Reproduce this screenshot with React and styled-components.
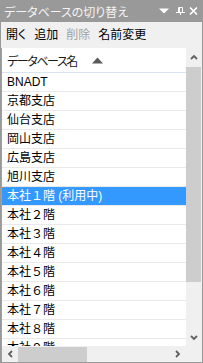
import React from 'react';
import styled, { createGlobalStyle } from 'styled-components';

const Global = createGlobalStyle`
  html, body {
    margin: 0;
    padding: 0;
    background: #ffffff;
  }
`;

const Panel = styled.div`
  width: 203px;
  height: 363px;
  box-sizing: border-box;
  display: flex;
  flex-direction: column;
  background: #f0f0f0;
  border: 1px solid #999999;
  border-top: none;
  font-family: "Liberation Sans", "Noto Sans CJK JP", sans-serif;
  font-size: 12px;
  overflow: hidden;
`;

const TitleBar = styled.div`
  height: 22px;
  flex: none;
  display: flex;
  align-items: center;
  padding-left: 3px;
  background: #999999;
  color: #f4f4f4;
  font-feature-settings: "palt";
`;

const TitleText = styled.span`
  flex: 1;
  white-space: nowrap;
`;

const TitleIcons = styled.div`
  display: flex;
  align-items: center;
  margin-right: 4px;
`;

const IconBox = styled.span`
  display: flex;
  width: ${p => p.w}px;
  justify-content: center;
`;

const Toolbar = styled.div`
  height: 26px;
  flex: none;
  display: flex;
  align-items: center;
  padding-left: 1px;
`;

const ToolButton = styled.span`
  padding: 0 4px;
  line-height: 18px;
  color: ${p => (p.disabled ? '#a2a2a2' : '#000000')};
  font-feature-settings: "palt";
`;

const ListBox = styled.div`
  flex: 1;
  min-height: 0;
  display: grid;
  grid-template-columns: 184px 16px;
  grid-template-rows: 1fr 16px;
  border-left: 1px solid #a0a0a0;
  background: #ffffff;
`;

const Viewport = styled.div`
  overflow: hidden;
  background: #ffffff;
`;

const Header = styled.div`
  height: 24px;
  display: flex;
  align-items: center;
  padding-left: 5px;
  border-bottom: 1px solid #d9e4f3;
  color: #1a1a1a;
  font-feature-settings: "palt";
`;

const HeaderLabel = styled.span`
  width: 85px;
  flex: none;
  white-space: nowrap;
  letter-spacing: -1.4px;
`;

const Row = styled.div`
  height: ${p => (p.selected ? 17 : 18)}px;
  line-height: ${p => (p.selected ? 17 : 18)}px;
  padding-left: 5px;
  white-space: nowrap;
  border-bottom: 1px solid #e9e9e9;
  border-top: ${p => (p.selected ? '1px dotted #d2802e' : 'none')};
  background: ${p => (p.selected ? '#3399ff' : '#ffffff')};
  color: ${p => (p.selected ? '#ffffff' : '#000000')};
`;

const VScroll = styled.div`
  display: flex;
  flex-direction: column;
  background: #f0f0f0;
`;

const VArrow = styled.div`
  height: ${p => p.h}px;
  flex: none;
  display: flex;
  align-items: center;
  justify-content: center;
`;

const VThumb = styled.div`
  height: 215px;
  flex: none;
  margin-right: 1px;
  background: #cdcdcd;
`;

const Spacer = styled.div`
  flex: 1;
`;

const HScroll = styled.div`
  display: flex;
  align-items: stretch;
  background: #f0f0f0;
`;

const HArrow = styled.div`
  width: ${p => p.w}px;
  flex: none;
  display: flex;
  align-items: center;
  justify-content: center;
`;

const HThumb = styled.div`
  width: 69px;
  flex: none;
  margin-top: 1px;
  background: #cdcdcd;
`;

const Corner = styled.div`
  background: #f0f0f0;
`;

const Chevron = ({ dir }) => {
  const pts = {
    up: '1,5 4,2 7,5',
    down: '1,2 4,5 7,2',
    left: '5,1 2,4 5,7',
    right: '2,1 5,4 2,7',
  }[dir];
  const vertical = dir === 'up' || dir === 'down';
  return (
    <svg width={vertical ? 8 : 7} height={vertical ? 7 : 8} viewBox={vertical ? '0 0 8 7' : '0 0 7 8'}>
      <polyline points={pts} fill="none" stroke="#606060" strokeWidth="1.8" />
    </svg>
  );
};

const rows = [
  'BNADT',
  '京都支店',
  '仙台支店',
  '岡山支店',
  '広島支店',
  '旭川支店',
  '本社１階 (利用中)',
  '本社２階',
  '本社３階',
  '本社４階',
  '本社５階',
  '本社６階',
  '本社７階',
  '本社８階',
  '本社９階',
];

export default function App() {
  return (
    <>
      <Global />
      <Panel>
        <TitleBar>
          <TitleText>データベースの切り替え</TitleText>
          <TitleIcons>
            <IconBox w={16}>
              <svg width="10" height="6" viewBox="0 0 10 6">
                <polygon points="0,0.5 10,0.5 5,5.5" fill="#ffffff" />
              </svg>
            </IconBox>
            <IconBox w={16}>
              <svg width="9" height="8" viewBox="0 0 9 8">
                <path d="M2.5 0.5 H6.5 V5 M2.5 0.5 V5 M3.5 0.5 V5 M0 5.5 H9 M4.5 5.5 V8" fill="none" stroke="#ffffff" strokeWidth="1" />
              </svg>
            </IconBox>
            <IconBox w={10}>
              <svg width="9" height="8" viewBox="0 0 9 8">
                <path d="M1 0.5 L8 7.5 M8 0.5 L1 7.5" fill="none" stroke="#ffffff" strokeWidth="1.6" />
              </svg>
            </IconBox>
          </TitleIcons>
        </TitleBar>

        <Toolbar>
          <ToolButton>開く</ToolButton>
          <ToolButton>追加</ToolButton>
          <ToolButton disabled>削除</ToolButton>
          <ToolButton>名前変更</ToolButton>
        </Toolbar>

        <ListBox>
          <Viewport>
            <Header>
              <HeaderLabel>データベース名</HeaderLabel>
              <svg width="11" height="7" viewBox="0 0 11 7">
                <polygon points="0,6.5 11,6.5 5.5,0.5" fill="#5a5a5a" />
              </svg>
            </Header>
            {rows.map((name, i) => (
              <Row key={name} selected={i === 6}>
                {name}
              </Row>
            ))}
          </Viewport>
          <VScroll>
            <VArrow h={19}>
              <Chevron dir="up" />
            </VArrow>
            <VThumb />
            <Spacer />
            <VArrow h={18}>
              <Chevron dir="down" />
            </VArrow>
          </VScroll>
          <HScroll>
            <HArrow w={16}>
              <Chevron dir="left" />
            </HArrow>
            <HThumb />
            <Spacer />
            <HArrow w={17}>
              <Chevron dir="right" />
            </HArrow>
          </HScroll>
          <Corner />
        </ListBox>
      </Panel>
    </>
  );
}
